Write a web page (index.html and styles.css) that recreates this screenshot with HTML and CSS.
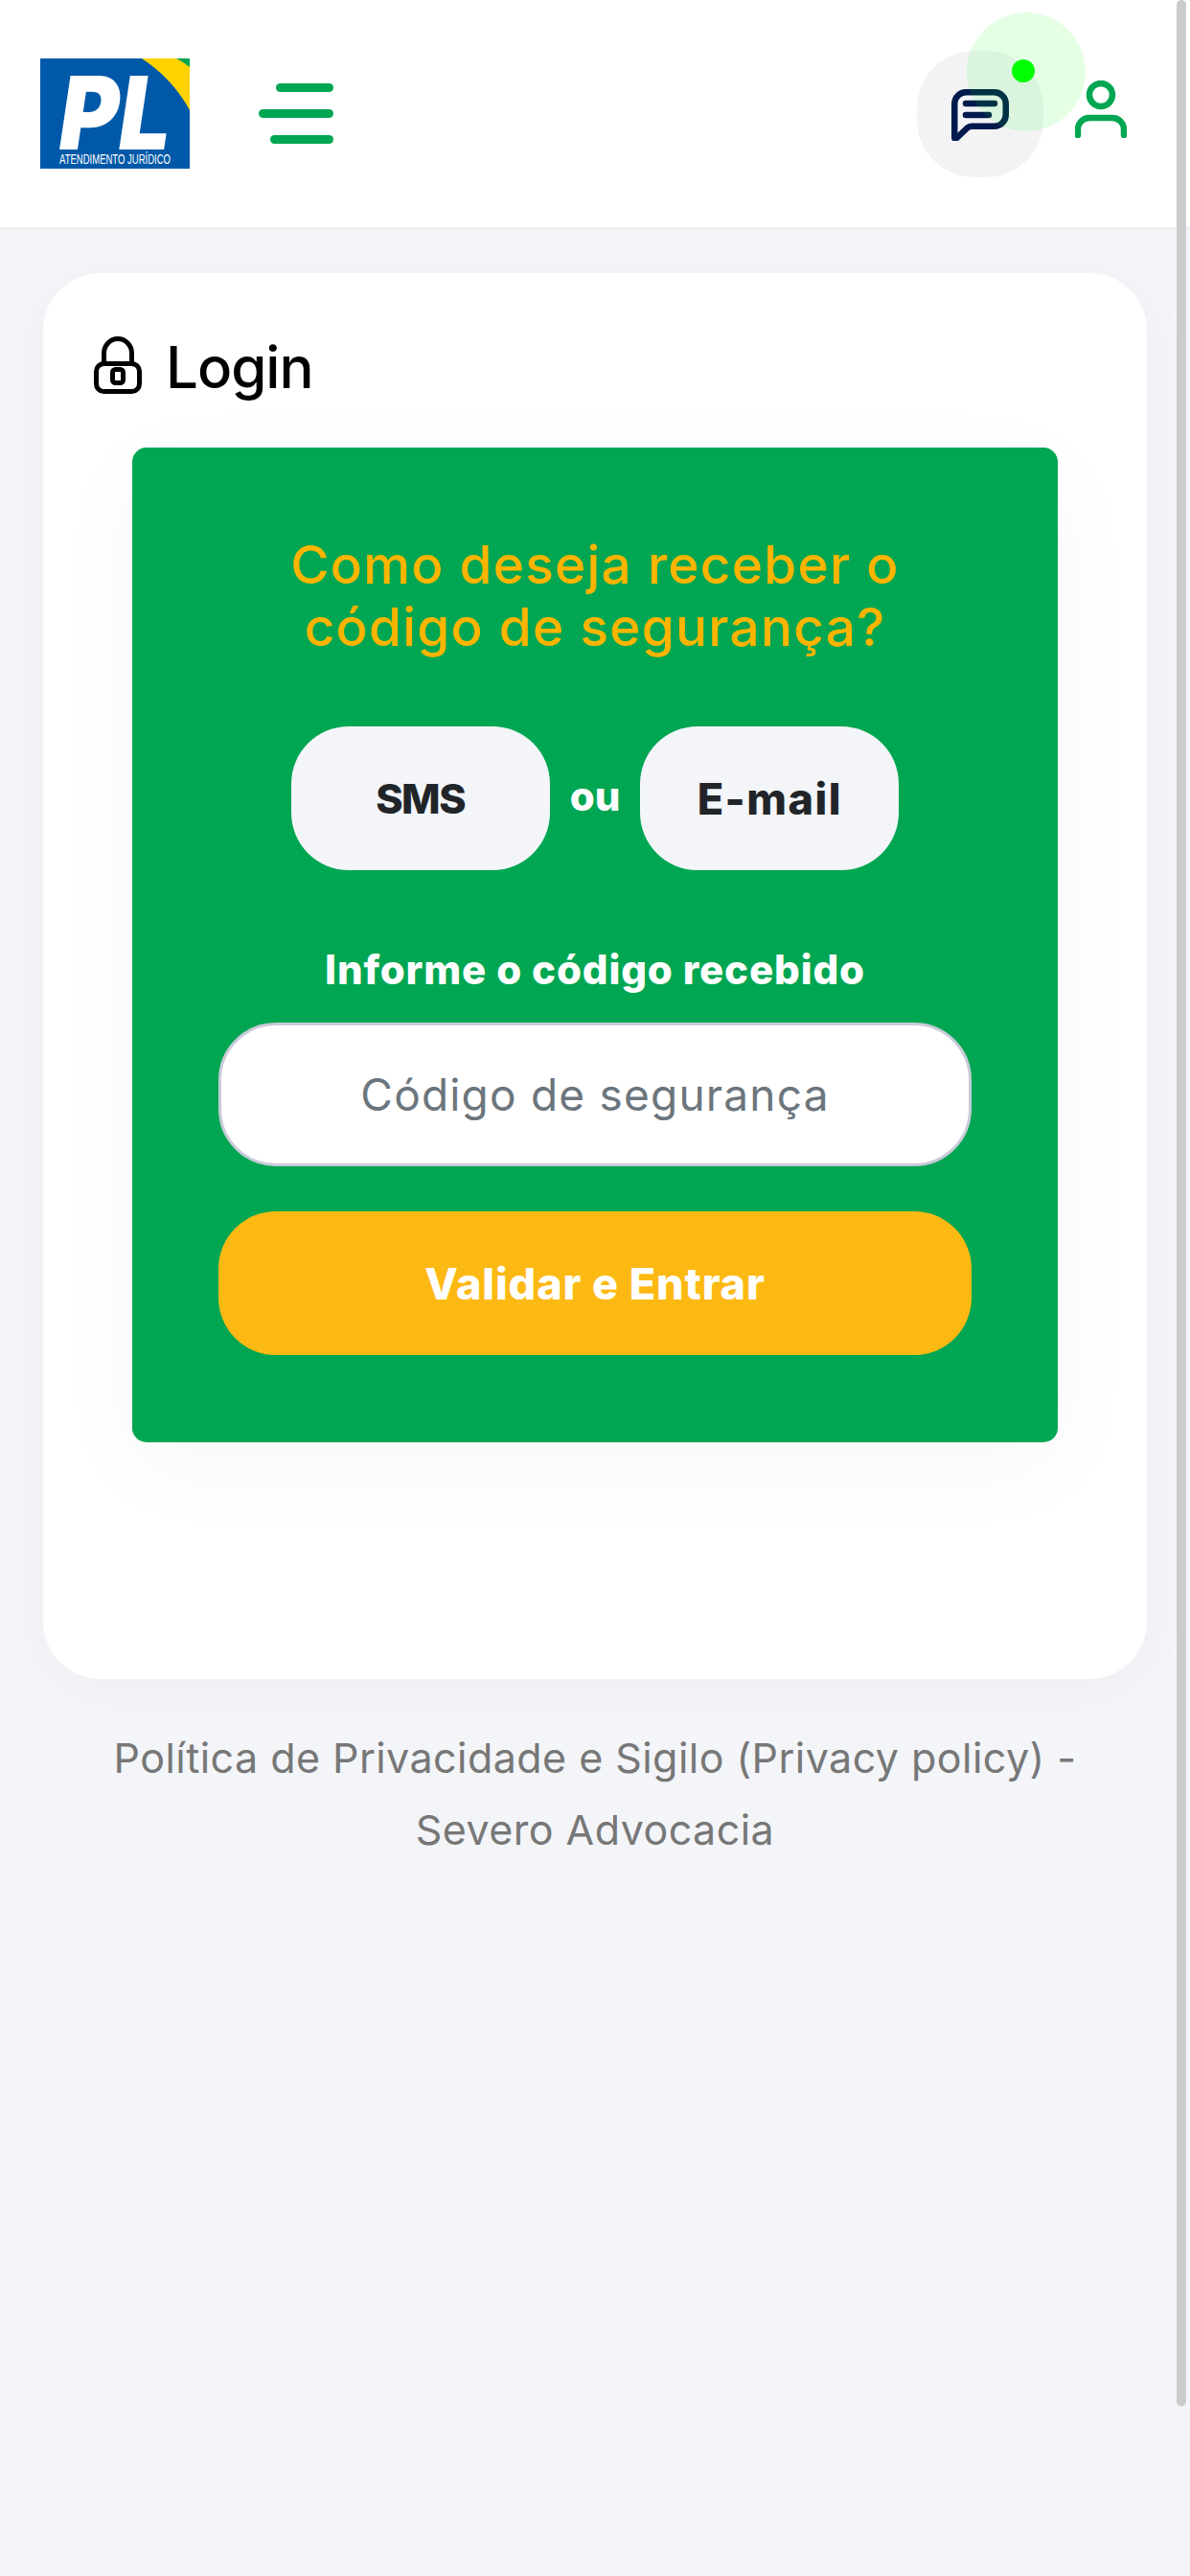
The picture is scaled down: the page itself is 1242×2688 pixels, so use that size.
FILE: index.html
```html
<!DOCTYPE html>
<html lang="pt-BR">
<head>
<meta charset="utf-8">
<title>Login</title>
<link rel="stylesheet" href="styles.css">
</head>
<body>
<header class="topbar">
  <svg class="logo" viewBox="0 0 156 115" aria-label="PL Atendimento Jurídico">
    <rect class="logo-blue" width="156" height="115"/>
    <path class="logo-yellow" d="M106 0Q138 21 156 54V0Z"/>
    <path class="logo-green" d="M142 0Q150 4 156 9V0Z"/>
    <text class="logo-pl" x="20" y="95" textLength="116" lengthAdjust="spacingAndGlyphs">PL</text>
    <text class="logo-sub" x="20" y="110" textLength="116" lengthAdjust="spacingAndGlyphs">ATENDIMENTO JURÍDICO</text>
  </svg>
  <div class="burger"><span class="bar bar-a"></span><span class="bar bar-b"></span><span class="bar bar-c"></span></div>
  <div class="actions">
    <div class="msg">
      <svg class="chat-icon" viewBox="0 0 60 54">
        <path d="M3.25 50.5V15.25A12 12 0 0 1 15.25 3.25H44.75A12 12 0 0 1 56.75 15.25V26.75A12 12 0 0 1 44.75 38.75H21Q18.5 38.75 16.5 40.5L6 50.5Q3.25 52.5 3.25 50.5Z"/>
        <path d="M15 15H45M15 27H39"/>
      </svg>
      <span class="pulse"></span>
      <span class="dot"></span>
    </div>
    <svg class="user-icon" viewBox="0 0 54 60">
      <circle cx="27" cy="15" r="12"/>
      <path d="M3 57V51A12 12 0 0 1 15 39H39A12 12 0 0 1 51 51V57"/>
    </svg>
  </div>
</header>
<main class="card">
  <h1 class="card-title">
    <svg class="lock-icon" viewBox="0 0 50 60">
      <rect x="2.5" y="28.5" width="45" height="29" rx="8"/>
      <path d="M10.5 28.5V17.5A14.5 15 0 0 1 39.5 17.5V28.5"/>
      <rect x="19.5" y="34.5" width="11" height="14" rx="3"/>
    </svg>
    <span class="card-title-text">Login</span>
  </h1>
  <section class="panel">
    <h2 class="panel-heading">Como deseja receber o<br>código de segurança?</h2>
    <div class="choice">
      <button class="choice-btn choice-sms">SMS</button>
      <span class="choice-or">ou</span>
      <button class="choice-btn choice-email">E-mail</button>
    </div>
    <label class="code-label" for="code">Informe o código recebido</label>
    <input class="code-input" id="code" type="text" placeholder="Código de segurança">
    <button class="submit">Validar e Entrar</button>
  </section>
</main>
<footer class="foot">Política de Privacidade e Sigilo (Privacy policy) -<br>Severo Advocacia</footer>
<div class="scroll-thumb"></div>
</body>
</html>
```
FILE: styles.css
```css
* { box-sizing: border-box; }
html, body { margin: 0; padding: 0; }
body {
  position: relative;
  height: 2688px;
  overflow: hidden;
  background: #f3f5f9;
  font-family: Inter, "Noto Sans", sans-serif;
}
.topbar {
  display: flex;
  align-items: center;
  height: 240px;
  padding: 0 66px 0 42px;
  background: #fff;
  border-bottom: 3px solid #eceef1;
}
.logo { width: 156px; height: 115px; flex: none; overflow: visible; }
.logo-blue { fill: #0059a8; }
.logo-yellow { fill: #ffd200; }
.logo-green { fill: #00a651; }
.logo-pl {
  fill: #fff;
  font-family: Inter, "Liberation Sans", sans-serif;
  font-weight: 900;
  font-style: italic;
  font-size: 106px;
}
.logo-sub {
  fill: #fff;
  font-family: "Liberation Sans", sans-serif;
  font-size: 15px;
}
.burger {
  display: flex;
  flex-direction: column;
  align-items: flex-end;
  gap: 18px;
  width: 78px;
  margin-left: 72px;
}
.bar { display: block; height: 9px; border-radius: 5px; background: #00a651; }
.bar-a { width: 60px; }
.bar-b { width: 78px; }
.bar-c { width: 66px; }
.actions { display: flex; align-items: center; gap: 33px; margin-left: auto; }
.msg {
  position: relative;
  display: flex;
  align-items: center;
  justify-content: center;
  width: 132px;
  height: 132px;
  border-radius: 60px;
  background: #f3f3f6;
}
.chat-icon { width: 60px; height: 54px; margin-top: 2px; fill: none; stroke: #001a4d; stroke-width: 6.5; stroke-linecap: round; stroke-linejoin: round; }
.pulse {
  position: absolute;
  left: 52px;
  top: -40px;
  width: 124px;
  height: 124px;
  border-radius: 50%;
  background: rgba(0, 255, 0, .1);
}
.dot {
  position: absolute;
  left: 99px;
  top: 9px;
  width: 24px;
  height: 24px;
  border-radius: 50%;
  background: #0f0;
}
.user-icon { width: 54px; height: 60px; margin-bottom: 10px; fill: none; stroke: #00a651; stroke-width: 6.5; stroke-linecap: round; }
.card {
  width: 1152px;
  height: 1467px;
  margin: 45px auto 0;
  padding: 66px 93px 0;
  background: #fff;
  border-radius: 60px;
  box-shadow: 0 10px 60px rgba(0, 0, 0, .03);
}
.card-title {
  display: flex;
  align-items: center;
  gap: 25px;
  height: 60px;
  margin: 0 0 56px -40px;
  font-size: 60px;
  font-weight: 500;
  letter-spacing: -1px;
  line-height: 60px;
  color: #000;
}
.card-title-text { padding-top: 4px; }
.lock-icon { width: 50px; height: 60px; flex: none; fill: none; stroke: #000; stroke-width: 5; stroke-linejoin: round; }
.panel {
  display: flex;
  flex-direction: column;
  align-items: center;
  width: 966px;
  height: 1038px;
  padding: 90px 90px 0;
  background: #00a651;
  border-radius: 15px;
  box-shadow: 0 25px 100px rgba(0, 0, 0, .035);
}
.panel-heading {
  margin: 0;
  font-size: 55px;
  font-weight: 500;
  letter-spacing: 1.2px;
  line-height: 65px;
  text-align: center;
  color: #ffb400;
  white-space: nowrap;
}
.choice { display: flex; align-items: center; gap: 21px; margin-top: 71px; }
.choice-btn {
  width: 270px;
  height: 150px;
  padding: 0;
  border: 0;
  border-radius: 60px;
  background: #f3f5f9;
  font: 800 45px Inter, "Noto Sans", sans-serif;
  color: #212529;
}
.choice-sms { font-size: 43px; letter-spacing: -1.5px; }
.choice-email { letter-spacing: 1.5px; }
.choice-or { font-size: 42px; font-weight: 800; color: #fff; margin-top: -6px; }
.code-label {
  margin-top: 74px;
  font-size: 42px;
  font-weight: 800;
  letter-spacing: .85px;
  line-height: 60px;
  color: #fff;
  white-space: nowrap;
}
.code-input {
  width: 786px;
  height: 150px;
  margin-top: 25px;
  padding: 0 30px;
  border: 3px solid #c8cbd8;
  border-radius: 60px;
  background: #fff;
  font: 400 46px Inter, "Noto Sans", sans-serif;
  letter-spacing: 1.2px;
  text-align: center;
  color: #6c757d;
}
.code-input::placeholder { color: #6c757d; opacity: 1; }
.submit {
  width: 786px;
  height: 150px;
  margin-top: 47px;
  border: 0;
  border-radius: 60px;
  background: #fdb913;
  font: 800 45px Inter, "Noto Sans", sans-serif;
  letter-spacing: .9px;
  color: #fff;
}
.foot {
  margin-top: 45px;
  font-size: 43px;
  letter-spacing: .45px;
  line-height: 75px;
  text-align: center;
  color: #777;
}
.scroll-thumb {
  position: absolute;
  top: 0;
  right: 4px;
  width: 10px;
  height: 2511px;
  border-radius: 5px;
  background: #ccc;
}
```
